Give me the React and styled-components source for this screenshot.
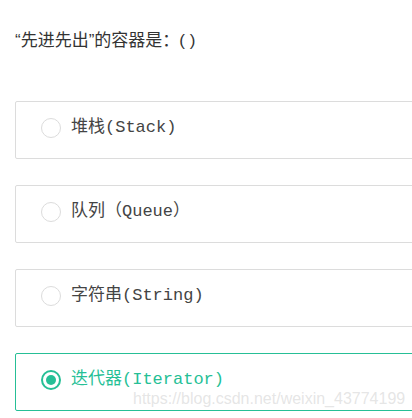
import React from 'react';
import styled, { createGlobalStyle } from 'styled-components';

const GlobalStyle = createGlobalStyle`
  html, body {
    margin: 0;
    padding: 0;
    background: #fff;
    overflow: hidden;
  }
`;

const Page = styled.div`
  position: relative;
  width: 412px;
  height: 418px;
  overflow: hidden;
  padding: 28px 0 0 15px;
  box-sizing: border-box;
`;

const Question = styled.div`
  font-family: 'Liberation Sans', 'Noto Sans CJK SC', sans-serif;
  font-size: 17px;
  line-height: 26px;
  color: #333;
  margin-bottom: 47px;
`;

const Options = styled.div`
  display: flex;
  flex-direction: column;
  gap: 26px;
`;

const Option = styled.label`
  display: flex;
  align-items: center;
  gap: 10px;
  width: 420px;
  height: 58px;
  box-sizing: border-box;
  padding: 0 0 4px 25px;
  border: 1px solid ${(p) => (p.$checked ? '#26bf96' : '#dcdcdc')};
  border-radius: 2px;
  font-family: 'Liberation Mono', 'Noto Sans CJK SC', monospace;
  font-size: 17px;
  line-height: 24px;
  color: ${(p) => (p.$checked ? '#26bf96' : '#444')};
`;

const Radio = styled.span`
  flex: none;
  width: 20px;
  height: 20px;
  box-sizing: border-box;
  border-radius: 50%;
  border: ${(p) => (p.$checked ? '2px solid #26bf96' : '1px solid #dcdcdc')};
  display: flex;
  align-items: center;
  justify-content: center;

  &::after {
    content: '';
    display: ${(p) => (p.$checked ? 'block' : 'none')};
    width: 10px;
    height: 10px;
    border-radius: 50%;
    background: #26bf96;
  }
`;

const Watermark = styled.div`
  position: absolute;
  left: 133px;
  top: 390px;
  font-family: 'Liberation Sans', sans-serif;
  font-size: 16px;
  line-height: 18px;
  color: rgba(190, 190, 190, 0.4);
  pointer-events: none;
  white-space: nowrap;
`;

const options = [
  { text: '堆栈(Stack)' },
  { text: '队列（Queue）' },
  { text: '字符串(String)' },
  { text: '迭代器(Iterator)', checked: true },
];

export default function App() {
  return (
    <Page>
      <GlobalStyle />
      <Question>“先进先出”的容器是：( )</Question>
      <Options>
        {options.map((o) => (
          <Option key={o.text} $checked={o.checked}>
            <Radio $checked={o.checked} />
            <span>{o.text}</span>
          </Option>
        ))}
      </Options>
      <Watermark>https://blog.csdn.net/weixin_43774199</Watermark>
    </Page>
  );
}
